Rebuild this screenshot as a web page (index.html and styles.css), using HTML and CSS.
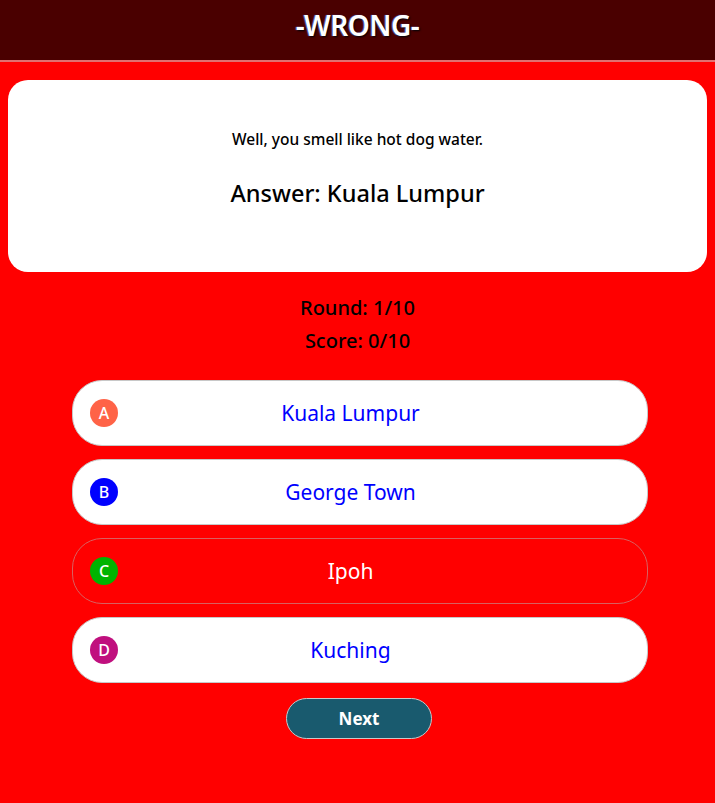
FILE: index.html
```html
<!DOCTYPE html>
<html lang="en">

<head>
    <meta charset="UTF-8">
    <meta name="viewport" content="width=device-width, initial-scale=1.0">
    <title>Quiz - Wrong</title>
    <link rel="stylesheet" href="styles.css">
</head>

<body class="wrong">
    <header class="top-bar">
        <h1>-WRONG-</h1>
    </header>

    <main class="quiz">
        <section class="result-card">
            <p class="result-msg">Well, you smell like hot dog water.</p>
            <p class="result-answer">Answer: Kuala Lumpur</p>
        </section>

        <section class="status">
            <p>Round: 1/10</p>
            <p>Score: 0/10</p>
        </section>

        <section class="options">
            <button class="option">
                <span class="option-letter letter-a">A</span>
                <span class="option-text">Kuala Lumpur</span>
            </button>
            <button class="option">
                <span class="option-letter letter-b">B</span>
                <span class="option-text">George Town</span>
            </button>
            <button class="option picked">
                <span class="option-letter letter-c">C</span>
                <span class="option-text">Ipoh</span>
            </button>
            <button class="option">
                <span class="option-letter letter-d">D</span>
                <span class="option-text">Kuching</span>
            </button>
        </section>

        <div class="next-wrap">
            <button class="next-btn">Next</button>
        </div>
    </main>
</body>

</html>
```

FILE: styles.css
```css
* {
    margin: 0;
    padding: 0;
    box-sizing: border-box;
}

body {
    font-family: "Noto Sans", sans-serif;
    color: #000;
    min-height: 100vh;
}

body.wrong {
    background: #ff0000;
}

button {
    font-family: inherit;
    cursor: pointer;
}

.top-bar {
    height: 62px;
    background: #4a0000;
    border-bottom: 2px solid #e07070;
    display: flex;
    justify-content: center;
    align-items: center;
    padding-bottom: 10px;
}

.top-bar h1 {
    font-size: 28px;
    font-weight: 600;
    color: #fff;
    letter-spacing: -0.5px;
    text-shadow: 1px 1px 2px #000, -1px 0 1px #6070ff;
}

.quiz {
    padding: 18px 8px 40px;
}

.result-card {
    background: #fff;
    border-radius: 20px;
    height: 192px;
    display: flex;
    flex-direction: column;
    justify-content: center;
    align-items: center;
    gap: 27px;
    padding-bottom: 16px;
}

.result-msg {
    font-size: 15.5px;
    font-weight: 500;
}

.result-answer {
    font-size: 23.5px;
    font-weight: 500;
}

.status {
    text-align: center;
    font-size: 20px;
    font-weight: 500;
    line-height: 33px;
    padding-top: 19px;
}

.options {
    width: 576px;
    margin: 23px 0 0 64px;
    display: flex;
    flex-direction: column;
    gap: 13px;
}

.option {
    height: 66px;
    border-radius: 30px;
    background: #fff;
    border: 1px solid #c8c8c8;
    display: flex;
    align-items: center;
    padding: 0 64px 0 17px;
}

.option.picked {
    background: transparent;
    border-color: #d86060;
}

.option-letter {
    width: 28px;
    height: 28px;
    border-radius: 50%;
    color: #fff;
    font-size: 16px;
    font-weight: 500;
    display: flex;
    justify-content: center;
    align-items: center;
}

.letter-a {
    background: #ff6347;
}

.letter-b {
    background: #0000ff;
}

.letter-c {
    background: #00b400;
}

.letter-d {
    background: #c0107e;
}

.option-text {
    flex: 1;
    text-align: center;
    font-size: 21px;
    color: #0000ff;
}

.option.picked .option-text {
    color: #fff;
}

.next-wrap {
    display: flex;
    justify-content: center;
    margin-top: 15px;
    padding-left: 3px;
}

.next-btn {
    width: 146px;
    height: 41px;
    border-radius: 21px;
    background: #195a6e;
    border: 1px solid #c8c8c8;
    color: #fff;
    font-size: 17px;
    font-weight: 700;
}
```
